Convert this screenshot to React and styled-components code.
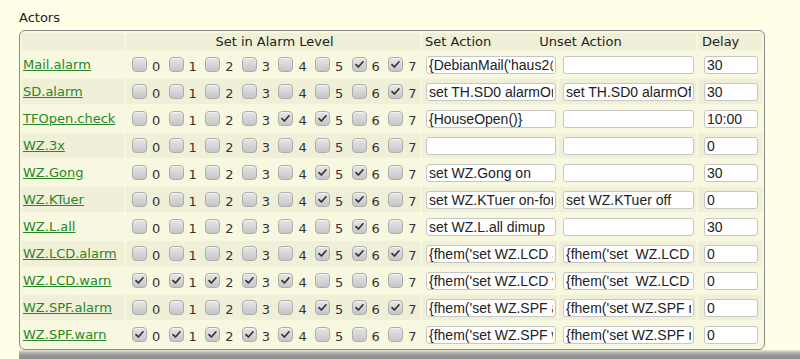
import React from "react";
import styled, { createGlobalStyle } from "styled-components";

const GlobalStyle = createGlobalStyle`
    body {
        margin: 0;
        background: #ffffe7;
        font-family: "DejaVu Sans", sans-serif;
        font-size: 13px;
        color: #222;
        overflow: hidden;
    }
`;

const Page = styled.div`
    padding: 10px 0 0 19px;
`;

const Title = styled.div`
    line-height: 15px;
    margin-bottom: 5px;
`;

const Block = styled.table`
    width: 746px;
    table-layout: fixed;
    border: 1px solid #8a8a8a;
    border-radius: 6px;
    border-spacing: 2px;
    background: #f8f8e0;
`;

const Row = styled.tr`
    & > td, & > th {
        background: ${(p) => (p.$odd ? "#f0f0d8" : "transparent")};
    }
`;

const Head = styled.th`
    height: 17px;
    padding: 0 0 0 ${(p) => p.$pad || 3}px;
    font-weight: normal;
    text-align: ${(p) => (p.$center ? "center" : "left")};
    vertical-align: middle;
    line-height: 15px;
    white-space: nowrap;
`;

const HeadLabel = styled.span`
    margin-right: ${(p) => p.$gap || 0}px;
`;

const Cell = styled.td`
    height: 25px;
    padding: 0 0 0 ${(p) => p.$pad || 0}px;
    vertical-align: middle;
    white-space: nowrap;
    overflow: hidden;
`;

const Name = styled.a`
    color: #278727;
    text-decoration: underline;
    cursor: pointer;
`;

const Levels = styled.div`
    display: grid;
    grid-template-columns: repeat(8, 36.6px);
    padding-left: 6px;
    align-items: center;
`;

const Level = styled.label`
    display: flex;
    align-items: flex-end;
    gap: 5px;
    cursor: pointer;
`;

const Box = styled.span`
    width: 13px;
    height: 13px;
    border: 1px solid #adadad;
    border-radius: 4px;
    background: linear-gradient(to bottom, #e6e6e6, #c6c6c6);
    box-shadow: inset 0 1px 0 #f4f4f4;
    display: flex;
    align-items: center;
    justify-content: center;
`;

const Digit = styled.span`
    line-height: 13px;
    margin-bottom: -1px;
    color: #333;
`;

const Field = styled.input`
    box-sizing: border-box;
    width: ${(p) => p.$w}px;
    height: 18px;
    border: 1px solid #c6c6c6;
    border-radius: 3px;
    background: #fff;
    padding: 0 2px;
    font-family: "Liberation Sans", Arial, sans-serif;
    font-size: 14px;
    color: #222;
    display: block;
    outline: none;
`;

const Footer = styled.div`
    height: 10px;
    background: linear-gradient(to bottom, #e8e8d4 0, #b0b0aa 30%, #959595 60%, #8c8c8c 100%);
`;

const actors = [
    ["Mail.alarm", [6, 7], "{DebianMail('haus2@example.org','Alarm')}", "", "30"],
    ["SD.alarm", [7], "set TH.SD0 alarmOn", "set TH.SD0 alarmOff", "30"],
    ["TFOpen.check", [4, 5], "{HouseOpen()}", "", "10:00"],
    ["WZ.3x", [], "", "", "0"],
    ["WZ.Gong", [5, 6], "set WZ.Gong on", "", "30"],
    ["WZ.KTuer", [5, 6], "set WZ.KTuer on-for-timer 10", "set WZ.KTuer off", "0"],
    ["WZ.L.all", [6], "set WZ.L.all dimup", "", "30"],
    ["WZ.LCD.alarm", [5, 6, 7], "{fhem('set WZ.LCD alarm')}", "{fhem('set  WZ.LCD noalarm')}", "0"],
    ["WZ.LCD.warn", [0, 1, 2, 3, 4], "{fhem('set WZ.LCD warn')}", "{fhem('set  WZ.LCD nowarn')}", "0"],
    ["WZ.SPF.alarm", [5, 6, 7], "{fhem('set WZ.SPF alarm')}", "{fhem('set WZ.SPF noalarm')}", "0"],
    ["WZ.SPF.warn", [0, 1, 2, 3, 4], "{fhem('set WZ.SPF warn')}", "{fhem('set WZ.SPF nowarn')}", "0"],
];

function Check({ on }) {
    return (
        <Box>
            {on ? (
                <svg width="11" height="11" viewBox="0 0 11 11">
                    <path d="M2 5.6 L4.4 8 L9 2.8" fill="none" stroke="#333" strokeWidth="1.7" strokeLinecap="round" strokeLinejoin="round" />
                </svg>
            ) : null}
        </Box>
    );
}

function App() {
    return (
        <Page>
            <GlobalStyle />
            <Title>Actors</Title>
            <Block>
                <colgroup>
                    <col style={{ width: 102 }} />
                    <col style={{ width: 294 }} />
                    <col style={{ width: 135 }} />
                    <col style={{ width: 137 }} />
                    <col style={{ width: 64 }} />
                </colgroup>
                <thead>
                    <Row $odd>
                        <Head />
                        <Head $center $pad={0}>Set in Alarm Level</Head>
                        <Head colSpan={2}>
                            <HeadLabel $gap={48}>Set Action</HeadLabel>
                            <HeadLabel>Unset Action</HeadLabel>
                        </Head>
                        <Head $pad={4}>Delay</Head>
                    </Row>
                </thead>
                <tbody>
                    {actors.map(([name, levels, setAct, unsetAct, delay], i) => (
                        <Row key={name} $odd={i % 2 === 1}>
                            <Cell $pad={1}>
                                <Name>{name}</Name>
                            </Cell>
                            <Cell>
                                <Levels>
                                    {[0, 1, 2, 3, 4, 5, 6, 7].map((l) => (
                                        <Level key={l}>
                                            <Check on={levels.includes(l)} />
                                            <Digit>{l}</Digit>
                                        </Level>
                                    ))}
                                </Levels>
                            </Cell>
                            <Cell $pad={4}>
                                <Field $w={130} defaultValue={setAct} />
                            </Cell>
                            <Cell $pad={4}>
                                <Field $w={131} defaultValue={unsetAct} />
                            </Cell>
                            <Cell $pad={6}>
                                <Field $w={54} defaultValue={delay} />
                            </Cell>
                        </Row>
                    ))}
                </tbody>
            </Block>
            <Footer />
        </Page>
    );
}

export default App;
